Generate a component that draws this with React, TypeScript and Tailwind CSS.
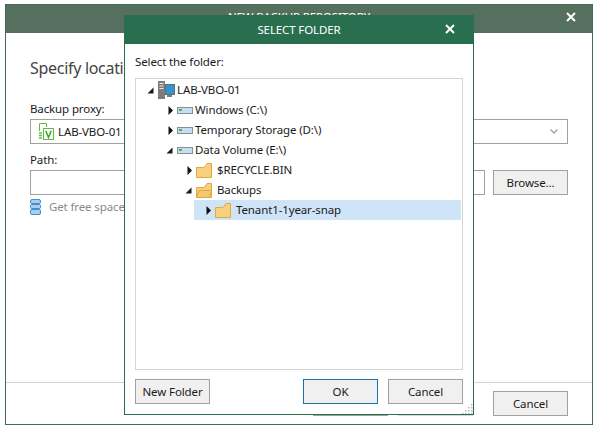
const font = "[font-family:'Noto_Sans','Open_Sans',sans-serif]";

function CloseIcon({ className }: { className: string }) {
  return (
    <svg viewBox="0 0 10 10" className={className}>
      <path d="M1 1 L9 9 M9 1 L1 9" stroke="#fff" strokeWidth="2" fill="none" />
    </svg>
  );
}

function Button({ label, className = "" }: { label: string; className?: string }) {
  return (
    <div
      className={`flex h-[25px] w-[75px] items-center justify-center border bg-[#f0f0f0] text-[#1a1a1a] ${className}`}
    >
      {label}
    </div>
  );
}

function Expanded() {
  return (
    <svg viewBox="0 0 7 7" className="h-[7px] w-[7px]">
      <path d="M6.5 0.5 V6.5 H0.5 Z" fill="#1a1a1a" />
    </svg>
  );
}

function Collapsed() {
  return (
    <svg viewBox="0 0 5 9" className="h-[9px] w-[5px]">
      <path d="M0.5 0 L5 4.5 L0.5 9 Z" fill="#111" />
    </svg>
  );
}

function Drive() {
  return (
    <svg viewBox="0 0 16 7" className="h-[7px] w-[16px]">
      <rect x="0.5" y="0.5" width="15" height="6" fill="#fff" stroke="#8a8f92" />
      <rect x="1" y="1" width="14" height="5" fill="#c6dff0" />
      <rect x="2" y="2" width="3" height="2" fill="#4caf50" />
    </svg>
  );
}

function Folder({ open = false }: { open?: boolean }) {
  return (
    <svg viewBox="0 0 16 15" className="h-[15px] w-[16px]">
      <path d="M0.5 14.5 V4.5 H8 L11 0.5 H15.5 V14.5 Z" fill="#f6cf7f" stroke="#e2a93f" />
      {open && <path d="M0.5 14.5 L3 7.5 H15.5 L13.5 14.5 Z" fill="#f3c873" stroke="#e2a93f" />}
    </svg>
  );
}

function Server() {
  return (
    <svg viewBox="0 0 17 18" className="h-[18px] w-[17px]">
      <rect x="0" y="0" width="7" height="18" fill="#7d7d7d" />
      <path d="M1.5 2.5 H5.5 M1.5 5 H5.5 M1.5 7.5 H5.5" stroke="#e8e8e8" />
      <rect x="7.5" y="3.5" width="9" height="10" fill="#2f96d3" stroke="#6a6a6a" />
      <rect x="9" y="14" width="5" height="2" fill="#7d7d7d" />
    </svg>
  );
}

function ProxyIcon() {
  return (
    <svg viewBox="0 0 16 17" className="h-[17px] w-[16px]">
      <path d="M1.5 8 V0.5 H8.5 V4" stroke="#5dbb46" fill="none" />
      <path d="M1 10 H4 M1 12.5 H4 M1 15 H4" stroke="#5dbb46" strokeWidth="1.5" />
      <rect x="5.5" y="5.5" width="10" height="11" fill="#fff" stroke="#5dbb46" />
      <path d="M7.8 7.8 L10.5 14.5 L13.2 7.8" stroke="#3ea32a" strokeWidth="1.5" fill="none" />
    </svg>
  );
}

function DbIcon() {
  return (
    <svg viewBox="0 0 11 16" className="h-[16px] w-[11px]">
      <rect x="0.5" y="0.5" width="10" height="4" rx="1.5" fill="#a9cdea" stroke="#3f8fd0" />
      <rect x="0.5" y="5.5" width="10" height="4" rx="1" fill="#a9cdea" stroke="#3f8fd0" />
      <rect x="0.5" y="10.5" width="10" height="5" rx="1.5" fill="#a9cdea" stroke="#3f8fd0" />
    </svg>
  );
}

function GripDots() {
  return (
    <svg viewBox="0 0 11 11" className="h-[11px] w-[11px]">
      {[[9, 1], [6, 4], [9, 4], [3, 7], [6, 7], [9, 7], [0, 10], [3, 10], [6, 10], [9, 10]].map(([x, y]) => (
        <rect key={`${x}-${y}`} x={x} y={y} width="1.5" height="1.5" fill="#b5b5b5" />
      ))}
    </svg>
  );
}

function SelectFolderDialog() {
  return (
    <div className="absolute left-[124px] top-[15px] flex h-[400px] w-[350px] flex-col border border-[#2a6e50] bg-white text-[11.5px] tracking-[-0.12px]">
      <div className="relative flex h-[28px] shrink-0 items-center justify-center bg-[#2a6e50] text-white">
        SELECT FOLDER
        <CloseIcon className="absolute right-[18px] top-[8px] h-[10px] w-[10px]" />
      </div>
      <div className="relative flex flex-1 flex-col px-[10px]">
        <p className="mt-[9px] h-[18px] leading-[18px] text-[#1a1a1a]">Select the folder:</p>
        <div className="mt-[7px] h-[292px] border border-[#d4d4d4] pt-[1px] text-[#1a1a1a]">
          <div className="flex h-[20px] items-center pl-[11px]">
            <Expanded />
            <span className="ml-[4px]"><Server /></span>
            <span className="ml-[2px]">LAB-VBO-01</span>
          </div>
          <div className="flex h-[20px] items-center pl-[32px]">
            <Collapsed />
            <span className="ml-[4px]"><Drive /></span>
            <span className="ml-[2px]">Windows (C:\)</span>
          </div>
          <div className="flex h-[20px] items-center pl-[32px]">
            <Collapsed />
            <span className="ml-[4px]"><Drive /></span>
            <span className="ml-[2px]">Temporary Storage (D:\)</span>
          </div>
          <div className="flex h-[20px] items-center pl-[30px]">
            <Expanded />
            <span className="ml-[4px]"><Drive /></span>
            <span className="ml-[2px]">Data Volume (E:\)</span>
          </div>
          <div className="flex h-[20px] items-center pl-[51px]">
            <Collapsed />
            <span className="ml-[4px]"><Folder /></span>
            <span className="ml-[5px]">$RECYCLE.BIN</span>
          </div>
          <div className="flex h-[20px] items-center pl-[49px]">
            <Expanded />
            <span className="ml-[4px]"><Folder open /></span>
            <span className="ml-[5px]">Backups</span>
          </div>
          <div className="ml-[58px] mr-[1px] flex h-[20px] items-center bg-[#cfe4f7] pl-[12px]">
            <Collapsed />
            <span className="ml-[4px]"><Folder /></span>
            <span className="ml-[5px]">Tenant1-1year-snap</span>
          </div>
        </div>
        <div className="mt-[9px] flex">
          <Button label="New Folder" className="border-[#a0a0a0]" />
          <Button label="OK" className="ml-auto border-[#1f6fa8]" />
          <Button label="Cancel" className="ml-[10px] border-[#a0a0a0]" />
        </div>
        <div className="absolute bottom-0 right-0"><GripDots /></div>
      </div>
    </div>
  );
}

export default function App() {
  return (
    <div className={`relative h-[429px] w-[598px] overflow-hidden bg-white text-[11.5px] tracking-[-0.12px] ${font}`}>
      <div className="ml-[5px] mt-[4px] flex h-[421px] w-[588px] flex-col border border-[#3f6b58]">
        <div className="relative flex h-[28px] shrink-0 items-center justify-center bg-[#55705f] pb-[4px] text-white">
          NEW BACKUP REPOSITORY
          <CloseIcon className="absolute right-[16px] top-[7px] h-[10px] w-[10px]" />
        </div>
        <div className="flex flex-1 flex-col px-[24px]">
          <h1 className="mt-[23px] h-[24px] text-[16px] leading-[24px] tracking-[-0.3px] text-[#444]">Specify location</h1>
          <p className="mt-[20px] h-[18px] leading-[18px] text-[#1a1a1a]">Backup proxy:</p>
          <div className="mt-[1px] flex h-[25px] items-center justify-between border border-[#a0a0a0] pl-[7px] pr-[9px] text-[#1a1a1a]">
            <span className="flex items-center gap-[4px]"><ProxyIcon />LAB-VBO-01</span>
            <svg viewBox="0 0 8 5" className="h-[5px] w-[8px]">
              <path d="M0.5 0.5 L4 4 L7.5 0.5" stroke="#a8a8a8" strokeWidth="1.5" fill="none" />
            </svg>
          </div>
          <p className="mt-[7px] h-[18px] leading-[18px] text-[#1a1a1a]">Path:</p>
          <div className="mt-[1px] flex gap-[8px]">
            <div className="h-[25px] w-[455px] border border-[#a0a0a0]" />
            <Button label="Browse..." className="border-[#a0a0a0]" />
          </div>
          <div className="mt-[3px] flex items-center gap-[8px] text-[#8a8a8a]">
            <DbIcon />
            Get free space
          </div>
          <div className="mt-auto -mx-[24px] flex h-[42px] border-t border-[#d4d4d4] pl-[307px] pt-[8px]">
            <Button label="Next" className="border-[#a0a0a0]" />
            <Button label="Finish" className="ml-[10px] border-[#d8d8d8]" />
            <Button label="Cancel" className="ml-[20px] border-[#a0a0a0]" />
          </div>
        </div>
      </div>
      <SelectFolderDialog />
    </div>
  );
}
